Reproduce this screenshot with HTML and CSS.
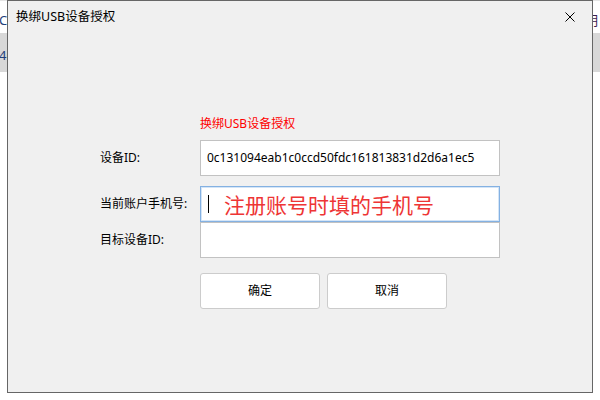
FILE: index.html
```html
<!DOCTYPE html>
<html lang="zh-CN">
<head>
<meta charset="utf-8">
<title>换绑USB设备授权</title>
<link rel="stylesheet" href="styles.css">
</head>
<body>
<div class="desktop">
  <div class="bg-row bg-row-top">
    <span class="frag-left">CI</span>
    <span class="frag-right">明</span>
  </div>
  <div class="bg-row bg-row-grey">
    <span class="frag-left">4c</span>
  </div>
</div>

<div class="dialog">
  <div class="titlebar">
    <span class="title">换绑USB设备授权</span>
    <span class="close">
      <svg width="10" height="10" viewBox="0 0 10 10"><path d="M0.5 0.5 L9.5 9.5 M9.5 0.5 L0.5 9.5" stroke="#000" stroke-width="1" fill="none"/></svg>
    </span>
  </div>
  <div class="body">
    <div class="subtitle">换绑USB设备授权</div>
    <div class="form">
      <div class="row">
        <label class="label">设备ID:</label>
        <div class="input">0c131094eab1c0ccd50fdc161813831d2d6a1ec5</div>
      </div>
      <div class="row row-spaced">
        <label class="label">当前账户手机号:</label>
        <div class="input input-focus"><span class="caret"></span><span class="placeholder">注册账号时填的手机号</span></div>
      </div>
      <div class="row">
        <label class="label">目标设备ID:</label>
        <div class="input"></div>
      </div>
    </div>
    <div class="buttons">
      <button class="btn">确定</button>
      <button class="btn">取消</button>
    </div>
  </div>
</div>
</body>
</html>
```

FILE: styles.css
```css
html, body {
  margin: 0;
  padding: 0;
}
body {
  width: 600px;
  height: 400px;
  overflow: hidden;
  background: #ffffff;
  position: relative;
  font-family: "Noto Sans", "Noto Sans CJK SC", sans-serif;
  color: #000;
}
.desktop {
  display: flex;
  flex-direction: column;
}
.bg-row {
  display: flex;
  justify-content: space-between;
  align-items: center;
  font-size: 13px;
  line-height: 16px;
  overflow: hidden;
}
.bg-row-top {
  height: 33px;
  padding-top: 6px;
  box-sizing: border-box;
  border-top: 1px solid #e4e4e4;
}
.bg-row-grey {
  height: 39px;
  background: #d8d8d8;
  align-items: flex-start;
  padding-top: 14px;
  box-sizing: border-box;
}
.frag-left {
  margin-left: -1px;
  color: #1f3f7a;
}
.frag-right {
  margin-right: 2px;
  color: #3a2050;
}

.dialog {
  position: absolute;
  left: 7px;
  top: 0;
  width: 586px;
  height: 393px;
  box-sizing: border-box;
  border: 1px solid #666666;
  background: #f0f0f0;
  display: flex;
  flex-direction: column;
}
.titlebar {
  height: 31px;
  display: flex;
  align-items: center;
  justify-content: space-between;
  padding: 0 17px 0 8px;
  flex-shrink: 0;
}
.title {
  font-size: 12.5px;
  line-height: 16px;
  color: #000;
}
.close {
  display: flex;
  width: 10px;
  height: 10px;
}
.body {
  padding-left: 92px;
  display: flex;
  flex-direction: column;
}
.subtitle {
  margin-top: 84px;
  margin-left: 100px;
  font-size: 12px;
  line-height: 16px;
  color: #ff0000;
}
.form {
  margin-top: 8px;
  display: flex;
  flex-direction: column;
}
.row {
  display: grid;
  grid-template-columns: 100px 300px;
  height: 36px;
}
.row-spaced {
  margin-top: 10px;
}
.label {
  font-size: 12px;
  line-height: 16px;
  display: flex;
  align-items: center;
  color: #000;
}
.input {
  box-sizing: border-box;
  height: 36px;
  border: 1px solid #c2c2c2;
  background: #ffffff;
  font-size: 12px;
  line-height: 16px;
  display: flex;
  align-items: center;
  padding-left: 6px;
  color: #000;
}
.input-focus {
  border-color: #84b1e2;
  box-shadow: inset 0 0 0 1px #d4e5f7;
  padding-left: 7px;
}
.caret {
  width: 1px;
  height: 18px;
  background: #000;
  margin-right: 15px;
}
.placeholder {
  font-family: "Noto Sans CJK SC", sans-serif;
  font-size: 21px;
  line-height: 24px;
  color: #ee3535;
}
.buttons {
  margin-top: 15px;
  margin-left: 100px;
  display: flex;
  gap: 7px;
}
.btn {
  width: 120px;
  height: 36px;
  box-sizing: border-box;
  border: 1px solid #cccccc;
  border-radius: 3px;
  background: #ffffff;
  font-family: "Noto Sans", "Noto Sans CJK SC", sans-serif;
  font-size: 12px;
  line-height: 16px;
  color: #000;
  padding: 0;
}
```
